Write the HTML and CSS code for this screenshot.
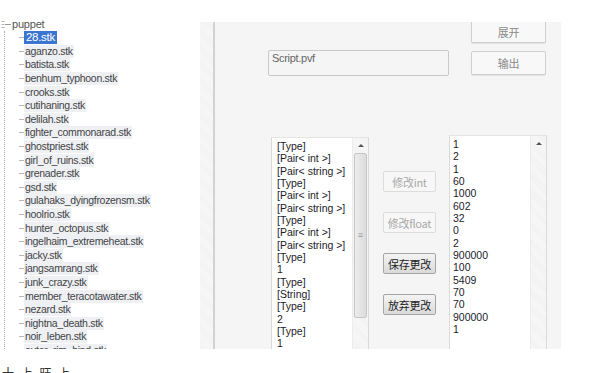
FILE: index.html
```html
<!DOCTYPE html>
<html lang="zh">
<head>
  <meta charset="UTF-8" />
  <title>Script.pvf</title>
  <link rel="stylesheet" href="styles.css">
</head>
<body>

  <div class="page">
    <div class="tree">
      <div class="root-row">
        <svg class="expander" width="11" height="9" viewBox="0 0 11 9">
          <path d="M0.5 1.5 H3.5 M0.5 4.5 H3.5 M0.5 7.5 H3.5" stroke="#b5b5b5" stroke-width="1" fill="none"/>
          <path d="M4 4.5 H10" stroke="#9a9a9a" stroke-width="1"/>
        </svg>
        <span class="root-label">puppet</span>
      </div>
      <div class="children">
        <div class="node"><span class="tick"></span><span class="label selected">28.stk</span></div>
        <div class="node"><span class="tick"></span><span class="label">aganzo.stk</span></div>
        <div class="node"><span class="tick"></span><span class="label">batista.stk</span></div>
        <div class="node"><span class="tick"></span><span class="label">benhum_typhoon.stk</span></div>
        <div class="node"><span class="tick"></span><span class="label">crooks.stk</span></div>
        <div class="node"><span class="tick"></span><span class="label">cutihaning.stk</span></div>
        <div class="node"><span class="tick"></span><span class="label">delilah.stk</span></div>
        <div class="node"><span class="tick"></span><span class="label">fighter_commonarad.stk</span></div>
        <div class="node"><span class="tick"></span><span class="label">ghostpriest.stk</span></div>
        <div class="node"><span class="tick"></span><span class="label">girl_of_ruins.stk</span></div>
        <div class="node"><span class="tick"></span><span class="label">grenader.stk</span></div>
        <div class="node"><span class="tick"></span><span class="label">gsd.stk</span></div>
        <div class="node"><span class="tick"></span><span class="label">gulahaks_dyingfrozensm.stk</span></div>
        <div class="node"><span class="tick"></span><span class="label">hoolrio.stk</span></div>
        <div class="node"><span class="tick"></span><span class="label">hunter_octopus.stk</span></div>
        <div class="node"><span class="tick"></span><span class="label">ingelhaim_extremeheat.stk</span></div>
        <div class="node"><span class="tick"></span><span class="label">jacky.stk</span></div>
        <div class="node"><span class="tick"></span><span class="label">jangsamrang.stk</span></div>
        <div class="node"><span class="tick"></span><span class="label">junk_crazy.stk</span></div>
        <div class="node"><span class="tick"></span><span class="label">member_teracotawater.stk</span></div>
        <div class="node"><span class="tick"></span><span class="label">nezard.stk</span></div>
        <div class="node"><span class="tick"></span><span class="label">nightna_death.stk</span></div>
        <div class="node"><span class="tick"></span><span class="label">noir_leben.stk</span></div>
        <div class="node"><span class="tick"></span><span class="label">outer_rim_bind.stk</span></div>
      </div>
    </div>

    <div class="panel">
      <div class="panel-strip"></div>
      <div class="panel-body">
        <div class="top-row">
          <div class="file-box">Script.pvf</div>
          <div class="top-buttons">
            <div class="btn btn-plain btn-cut">展开</div>
            <div class="btn btn-plain btn-out">输出</div>
          </div>
        </div>

        <div class="edit-row">
          <div class="list list-keys">
            <div class="list-text">
              <div>[Type]</div>
              <div>[Pair&lt; int &gt;]</div>
              <div>[Pair&lt; string &gt;]</div>
              <div>[Type]</div>
              <div>[Pair&lt; int &gt;]</div>
              <div>[Pair&lt; string &gt;]</div>
              <div>[Type]</div>
              <div>[Pair&lt; int &gt;]</div>
              <div>[Pair&lt; string &gt;]</div>
              <div>[Type]</div>
              <div>1</div>
              <div>[Type]</div>
              <div>[String]</div>
              <div>[Type]</div>
              <div>2</div>
              <div>[Type]</div>
              <div>1</div>
            </div>
            <div class="scrollbar">
              <span class="arrow-up"></span>
              <div class="thumb"><span class="grip">≡</span></div>
            </div>
          </div>

          <div class="edit-buttons">
            <div class="btn btn-disabled">修改int</div>
            <div class="btn btn-disabled">修改float</div>
            <div class="btn btn-active">保存更改</div>
            <div class="btn btn-active">放弃更改</div>
          </div>

          <div class="list list-values">
            <div class="list-text">
              <div>1</div>
              <div>2</div>
              <div>1</div>
              <div>60</div>
              <div>1000</div>
              <div>602</div>
              <div>32</div>
              <div>0</div>
              <div>2</div>
              <div>900000</div>
              <div>100</div>
              <div>5409</div>
              <div>70</div>
              <div>70</div>
              <div>900000</div>
              <div>1</div>
            </div>
            <div class="scrollbar">
              <span class="arrow-up"></span>
            </div>
          </div>
        </div>
      </div>
    </div>
  </div>

  <div class="status">十 上 旺 上</div>

</body>
</html>
```

FILE: styles.css
```css
body {
  margin: 0;
  background: #ffffff;
  font-family: "Liberation Sans", Arial, sans-serif;
  overflow: hidden;
  height: 373px;
}

.page {
  display: flex;
  align-items: flex-start;
  height: 349px;
}

/* left file tree */
.tree {
  width: 200px;
  height: 349px;
  padding-top: 17px;
  box-sizing: border-box;
  overflow: hidden;
  font-size: 10.5px;
  letter-spacing: -0.3px;
  color: #444;
}

.root-row {
  display: flex;
  align-items: center;
  height: 14px;
}

.expander {
  margin-left: 1px;
}

.root-label {
  color: #555;
  font-size: 11px;
  letter-spacing: -0.2px;
}

.children {
  margin-left: 4px;
  border-left: 1px dotted #b0b0b0;
}

.node {
  display: flex;
  align-items: center;
  height: 13.6px;
}

.tick {
  width: 5px;
  margin-left: 14px;
  border-top: 1px solid #b8b8b8;
}

.label {
  background: #eef0f4;
  padding: 0 1px;
  line-height: 13px;
}

.label.selected {
  background: #3a75d0;
  color: #ffffff;
  font-size: 11.5px;
  padding: 0 2px;
}

/* right panel */
.panel {
  margin-top: 22px;
  width: 361px;
  height: 327px;
  display: flex;
  overflow: hidden;
  background: #f5f5f5;
}

.panel-strip {
  width: 13px;
  flex: 0 0 13px;
  background: repeating-linear-gradient(45deg, #f2f2f2 0 1px, #f8f8f8 1px 2px);
  border-right: 2px solid #d2d2d2;
}

.panel-body {
  flex: 1;
  display: flex;
  flex-direction: column;
}

.top-row {
  display: flex;
  align-items: flex-start;
  padding-left: 53px;
  height: 54px;
}

.file-box {
  margin-top: 28px;
  width: 181px;
  height: 26px;
  box-sizing: border-box;
  border: 1px solid #c9c9c9;
  border-radius: 2px;
  padding: 1px 3px;
  font-size: 11px;
  line-height: 13px;
  color: #666;
  letter-spacing: -0.3px;
}

.top-buttons {
  margin-left: 22px;
  width: 75px;
  display: flex;
  flex-direction: column;
}

.btn {
  box-sizing: border-box;
  display: flex;
  align-items: center;
  justify-content: center;
  border: 1px solid #cfcfcf;
  border-radius: 2px;
  font-family: "Noto Sans CJK SC", "Liberation Sans", sans-serif;
  font-size: 11px;
  letter-spacing: -0.3px;
}

.btn-plain {
  background: #f8f8f8;
  color: #8a8a8a;
  box-shadow: 0 1px 0 #e2e2e2;
}

.btn-cut {
  height: 21px;
  border-top: none;
  border-radius: 0 0 2px 2px;
}

.btn-out {
  margin-top: 8px;
  height: 24px;
}

.edit-row {
  display: flex;
  align-items: flex-start;
  margin-top: 59px;
  padding-left: 56px;
}

.list {
  width: 98px;
  height: 260px;
  box-sizing: border-box;
  display: flex;
  background: #ffffff;
  border: 1px solid #dadada;
  border-top-color: #e4e4e4;
  font-size: 10.5px;
  line-height: 12.33px;
  color: #1c1c2a;
}

.list-keys {
  margin-top: 2px;
}

.list-text {
  flex: 1;
  padding: 2px 0 0 5px;
  white-space: nowrap;
  overflow: hidden;
}

.list-values .list-text {
  padding-left: 3px;
}

.scrollbar {
  width: 15px;
  flex: 0 0 15px;
  display: flex;
  flex-direction: column;
  align-items: center;
  background: repeating-linear-gradient(45deg, #f1f1f1 0 1px, #f8f8f8 1px 2px);
  border-left: 1px solid #ececec;
}

.arrow-up {
  margin-top: 6px;
  width: 0;
  height: 0;
  border-left: 3px solid transparent;
  border-right: 3px solid transparent;
  border-bottom: 3px solid #555;
}

.thumb {
  margin-top: 6px;
  width: 13px;
  height: 165px;
  box-sizing: border-box;
  border: 1px solid #c6c6c6;
  border-radius: 2px;
  background: linear-gradient(to right, #ececec, #dcdcdc);
  display: flex;
  align-items: center;
  justify-content: center;
}

.grip {
  font-size: 9px;
  color: #9a9a9a;
}

.edit-buttons {
  margin-left: 14px;
  width: 53px;
  display: flex;
  flex-direction: column;
  gap: 20px;
  padding-top: 36px;
}

.edit-buttons .btn {
  height: 21px;
}

.btn-disabled {
  background: #f7f7f7;
  color: #a8a8a8;
  border-color: #dcdcdc;
}

.btn-active {
  background: linear-gradient(#f4f4f4, #dadada);
  color: #222;
  border-color: #a5a5a5;
}

.list-values {
  margin-left: 13px;
}

/* status line, only the tops of its glyphs show above the window edge */
.status {
  margin-top: 17px;
  margin-left: 2px;
  font-family: "Noto Sans CJK SC", sans-serif;
  font-size: 12px;
  line-height: 14px;
  color: #333;
  letter-spacing: 2px;
}
```
